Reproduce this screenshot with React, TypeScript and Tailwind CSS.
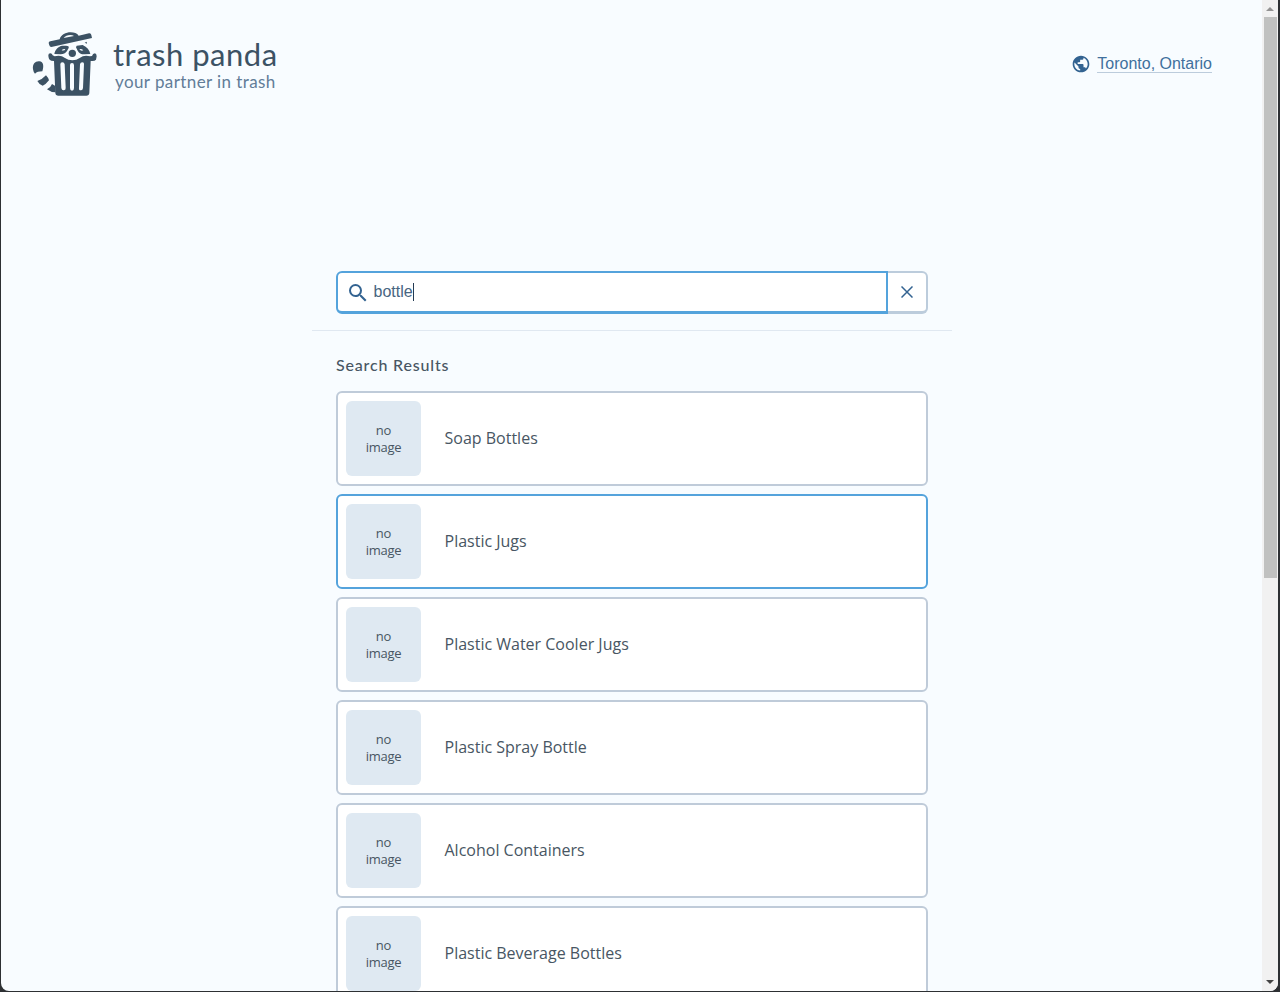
import React from "react";
import { MdPublic, MdSearch } from "react-icons/md";

const results = [
  "Soap Bottles",
  "Plastic Jugs",
  "Plastic Water Cooler Jugs",
  "Plastic Spray Bottle",
  "Alcohol Containers",
  "Plastic Beverage Bottles",
];

function Logo() {
  return (
    <svg viewBox="24 21 198 198" className="h-[66px] w-[66px] shrink-0" fill="#3c5264">
      <path d="M74 57 Q74 53 79 52 L107 46 C113 22 153 19 164 35 L195 28 Q201 27 202 33 L204 42 L82 69 Q77 69 76 64Z" />
      <path d="M119 42 C125 33 142 30 150 36Z" fill="#f8fcff" />
      <path d="M91 90 C93 77 103 67 115 65 L126 65 Q136 65 134 72 L129 81 Q122 91 110 91Z M158 65 L176 63 C189 69 197 78 199 90 L181 91 Q166 91 161 80 L156 70Z" />
      <path d="M113 79 Q117 74 124 75 Q122 81 113 79Z M166 75 Q174 74 178 79 Q170 82 166 75Z" fill="#f8fcff" />
      <circle cx="145" cy="88" r="11" />
      <path d="M182 56 L188 53 L189 59Z" />
      <path d="M73 94 Q73 88 79 88 Q84 88 86 94 L92 97 Q109 91 123 102 Q132 109 145 109 Q158 109 167 102 Q181 91 198 97 L204 96 Q206 88 213 88 Q218 90 218 97 L216 107 Q213 111 205 111 L200 111 L196 207 Q195 215 187 215 L103 215 Q95 215 94 207 L90 111 L82 110 Q73 108 73 94Z" />
      <path d="M109 121 Q109 115 115 115 Q121 115 122 121 L125 191 Q126 198 120 199 Q113 200 112 192Z M138 123 Q138 117 144 117 Q150 117 150 124 L150 192 Q150 200 144 200 Q138 200 138 192Z M168 121 Q169 115 175 115 Q181 115 180 121 L177 192 Q176 200 170 199 Q164 199 165 191Z" fill="#f8fcff" />
      <path d="M27 136 C25 119 34 111 46 112 C59 113 60 128 55 142 Q40 142 33 149 Q28 144 27 136Z M40 171 Q54 167 66 154 Q72 160 75 169 Q66 181 56 185 Q45 181 40 171Z M69 196 Q80 191 84 180 L94 186 L95 205 Q80 205 69 196Z" />
    </svg>
  );
}

export default function App() {
  return (
    <div className="h-screen overflow-hidden bg-[#2d3033]">
      <div className="ml-px mr-[2px] flex h-[991px] overflow-hidden rounded-b-lg bg-[#f8fcff]">
        <main className="min-w-0 flex-1">
          <header className="flex h-32 items-start justify-between pl-[31px] pr-[50px] pt-[31px]">
            <div className="flex gap-[15px]">
              <Logo />
              <div className="flex flex-col pt-[3px] font-['Lato',sans-serif]">
                <h1 className="h-[39px] whitespace-nowrap text-[31px] leading-10 tracking-[0.5px] text-[#3c5264]">trash panda</h1>
                <p className="whitespace-nowrap pl-[2px] text-[17px] leading-[18px] tracking-[0.41px] text-[#627d98]">your partner in trash</p>
              </div>
            </div>
            <button className="mt-[21px] flex items-center gap-[6px] font-['Liberation_Sans',sans-serif] text-base leading-5 text-[#40709d]">
              <MdPublic className="mt-0.5 h-5 w-5 text-[#336391]" />
              <span className="h-[19px] border-b border-[#bcccdc] leading-5">Toronto, Ontario</span>
            </button>
          </header>

          <section className="ml-[311px] w-[640px] border-b border-[#e0e8f1] px-6 pb-4 pt-[143px]">
            <div className="flex h-[43px]">
              <div className="flex flex-1 items-center rounded-l-[6px] border-2 border-b-[3px] border-[#54a3dc] bg-white pl-[7.5px] pt-px font-['Liberation_Sans',sans-serif] text-base text-[#486581]">
                <MdSearch className="h-6 w-6 text-[#336391]" />
                <span className="-mt-px ml-1">bottle</span>
                <span className="-mt-px h-[18px] w-px bg-[#243b53]" />
              </div>
              <button aria-label="Clear search" className="flex w-10 items-center justify-center rounded-r-[6px] border-2 border-b-[3px] border-l-0 border-[#bcccdc] bg-white pr-px">
                <svg viewBox="0 0 12 12" className="h-3 w-3" fill="none" stroke="#336391" strokeWidth="1.5"><path d="m.5.5 11 11m0-11-11 11" /></svg>
              </button>
            </div>
          </section>

          <section className="ml-[335px] w-[592px] pt-[22px]">
            <h2 className="h-[38px] font-['Lato',sans-serif] text-base font-medium leading-6 tracking-[0.82px] text-[#485663]">Search Results</h2>
            <ul className="flex flex-col gap-2">
              {results.map((name, index) => (
                <li key={name} className={`flex h-[95px] items-center rounded-[6px] border-2 bg-white pl-2 font-['Open_Sans',sans-serif] text-[#485663] ${index === 1 ? "border-[#54a3dc]" : "border-[#bfcbd9]"}`}>
                  <div className="flex h-[75px] w-[75px] items-center justify-center rounded-[6px] bg-[#dfe9f2] text-center text-[13px] leading-[17px] tracking-[-0.25px]">
                    <span>no<br />image</span>
                  </div>
                  <span className="ml-[23.5px] pb-[2px] text-base">{name}</span>
                </li>
              ))}
            </ul>
          </section>
        </main>

        <aside className="flex w-4 shrink-0 flex-col items-center bg-[#f1f1f1]">
          <div className="flex h-[17px] shrink-0 items-center">
            <svg viewBox="0 0 8 4" className="h-1 w-2" fill="#929292"><path d="M0 4 4 0l4 4Z" /></svg>
          </div>
          <div className="h-[561px] w-[13px] shrink-0 bg-[#c0c1c0]" />
          <div className="flex-1" />
          <div className="flex h-[17px] items-center pb-0.5">
            <svg viewBox="0 0 8 4" className="h-1 w-2" fill="#444"><path d="M0 0h8L4 4Z" /></svg>
          </div>
        </aside>
      </div>
    </div>
  );
}
